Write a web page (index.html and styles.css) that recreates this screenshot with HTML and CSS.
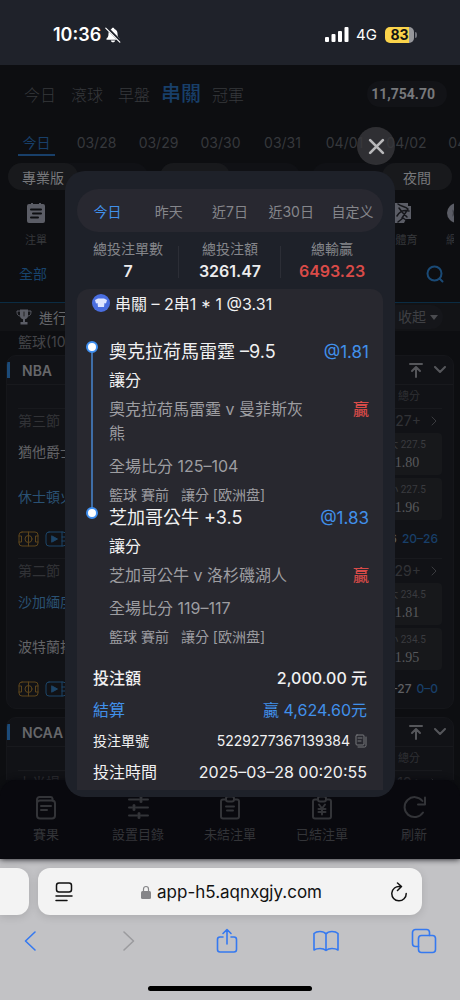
FILE: index.html
```html
<!DOCTYPE html>
<html lang="zh-Hant">
<head>
<meta charset="utf-8">
<meta name="viewport" content="width=device-width, initial-scale=1">
<title>投注記錄</title>
<link rel="stylesheet" href="styles.css">
</head>
<body>
<svg class="defs" aria-hidden="true">
  <symbol id="i-top" viewBox="0 0 14 16"><path d="M1 2h12M7 15V5M3 9l4-4 4 4"/></symbol>
  <symbol id="i-down" viewBox="0 0 12 8"><path d="M1 1l5 5 5-5"/></symbol>
  <symbol id="i-right" viewBox="0 0 6 10"><path d="M1 1l4 4-4 4"/></symbol>
  <symbol id="i-court" viewBox="0 0 22 16"><rect x="1" y="1" width="19" height="14" rx="3"/><path d="M10.500 1v14M1 5h2.500v6H1M20 5h-2.500v6H20"/><circle cx="10.500" cy="8" r="3.500"/></symbol>
  <symbol id="i-video" viewBox="0 0 22 16"><rect x="1" y="1" width="20" height="14" rx="3"/><path d="M17 1v14M17 6h4M17 10h4"/><path d="M7 5l5.500 3L7 11z" fill="currentColor"/></symbol>
</svg>

<header class="status">
  <div class="status-left">
    <span class="clock">10:36</span>
    <svg class="bell" viewBox="0 0 16 16" aria-hidden="true"><path d="M8 .8c.8 0 1.300.5 1.400 1.200 2 .6 3.100 2.300 3.100 4.400 0 3 .8 3.900 1.900 5 .5.500.2 1.300-.5 1.300H2.100c-.7 0-1-.8-.5-1.300 1.100-1.100 1.900-2 1.900-5 0-2.100 1.100-3.800 3.100-4.400C6.700 1.300 7.200.8 8 .8zM5.800 13.500h4.400c-.2 1.100-1.100 1.800-2.200 1.800s-2-.7-2.200-1.800z" fill="#fff"/><path d="M1.500.5l14 14" stroke="#1f222a" stroke-width="3"/><path d="M.8 1.200l14 14" stroke="#fff" stroke-width="1.200"/></svg>
  </div>
  <div class="status-right">
    <svg class="signal" viewBox="0 0 24 15" aria-hidden="true"><rect x="0" y="10" width="4" height="5" rx="1"/><rect x="6.500" y="7" width="4" height="8" rx="1"/><rect x="13" y="4" width="4" height="11" rx="1"/><rect x="19.500" y="0" width="4" height="15" rx="1"/></svg>
    <span class="network">4G</span>
    <span class="battery"><span class="battery-level">83</span></span>
  </div>
</header>

<main class="app">
  <div class="feed">
    <nav class="sports">
      <a href="#">今日</a><a href="#">滾球</a><a href="#">早盤</a><a href="#" class="on">串關</a><a href="#">冠軍</a>
      <span class="balance">11,754.70</span>
    </nav>
    <nav class="dates">
      <a href="#" class="on">今日</a><a href="#">03/28</a><a href="#">03/29</a><a href="#">03/30</a><a href="#">03/31</a><a href="#">04/01</a><a href="#">04/02</a><a href="#">04/03</a>
    </nav>
    <div class="switches">
      <div class="switch"><button class="on">專業版</button><button>新手版</button></div>
      <div class="switch"><button class="on">熱門</button><button>時間</button></div>
      <div class="switch"><button>日間</button><button class="on">夜間</button></div>
    </div>
    <div class="shortcuts">
      <a href="#"><svg viewBox="0 0 22 22" aria-hidden="true"><path d="M4 2h2V1h2v1h6V1h2v1h2a2 2 0 0 1 2 2v15a2 2 0 0 1-2 2H4a2 2 0 0 1-2-2V4a2 2 0 0 1 2-2z" fill="#5b5d66"/><path d="M6 7.500h10M8 11.500h8M6 15.500h7" stroke="#0d0e11" stroke-width="2" stroke-linecap="round"/></svg>注單</a>
      <a href="#"><svg viewBox="0 0 22 22" aria-hidden="true"><path d="M1 1h17v3h3v13h-5l-2 4H1z" fill="#5b5d66"/><path d="M8 2c4 3 7 2 10 5M7 14c3-5 8-6 12-5M11 9l6 6M18 7l-6 9M8 20l5-4 3 2M9 6l3 4" stroke="#15161a" stroke-width="1.500" fill="none"/></svg>熊體育</a>
      <a href="#"><svg viewBox="0 0 22 22" aria-hidden="true"><circle cx="11" cy="11" r="10" fill="#5b5d66"/><circle cx="14" cy="11" r="8" fill="#0d0e11"/><path d="M9 4c-3 4-3 10 0 14M12 5c-2 4-2 8 0 12" stroke="#5b5d66" stroke-width="1.500" fill="none"/></svg>網球</a>
    </div>
    <div class="filter">
      <a href="#">全部</a>
      <button aria-label="搜尋"><svg viewBox="0 0 18 18" aria-hidden="true"><circle cx="8.500" cy="8.500" r="7"/><path d="M13.500 13.500l3 3"/></svg></button>
    </div>
    <div class="section">
      <svg class="trophy" viewBox="0 0 16 16" aria-hidden="true"><path d="M4 .5h8v6a4 4 0 0 1-3 3.800V13h2.500v2.500h-7V13H7v-2.700a4 4 0 0 1-3-3.800z" fill="#5b5d66"/><path d="M4 2H1c0 4 1 5 3.500 5M12 2h3c0 4-1 5-3.500 5" fill="none" stroke="#5b5d66"/><path d="M8 3v4" stroke="#222"/></svg>
      <span>進行中</span>
      <button class="fold">收起 <i></i></button>
    </div>
    <div class="group">籃球(10)</div>

    <section class="league">
      <header><h2>NBA</h2><svg class="up"><use href="#i-top"/></svg><svg class="down"><use href="#i-down"/></svg></header>
      <div class="col">總分</div>
      <article class="match">
        <div class="period"><span>第三節</span><span class="more">27+ <svg><use href="#i-right"/></svg></span></div>
        <div class="line"><span>猶他爵士</span><button><small>大 227.5</small>1.80</button></div>
        <div class="line"><span class="blue">休士頓火箭</span><button><small>小 227.5</small>1.96</button></div>
        <div class="score"><svg class="court"><use href="#i-court"/></svg><svg class="video"><use href="#i-video"/></svg><b>86</b><em>20–26</em></div>
      </article>
      <article class="match">
        <div class="period"><span>第二節</span><span class="more">29+ <svg><use href="#i-right"/></svg></span></div>
        <div class="line"><span class="blue">沙加緬度國王</span><button><small>大 234.5</small>1.81</button></div>
        <div class="line"><span>波特蘭拓荒者</span><button><small>小 234.5</small>1.95</button></div>
        <div class="score"><svg class="court"><use href="#i-court"/></svg><svg class="video"><use href="#i-video"/></svg><b>30–27</b><em>0–0</em></div>
      </article>
    </section>
    <section class="league">
      <header><h2>NCAA</h2><svg class="up"><use href="#i-top"/></svg><svg class="down"><use href="#i-down"/></svg></header>
      <div class="col">總分</div>
      <article class="match">
        <div class="period"><span>上半場</span><span class="more">19+ <svg><use href="#i-right"/></svg></span></div>
      </article>
    </section>
  </div>

  <nav class="tabbar">
    <a href="#"><svg viewBox="0 0 24 24" aria-hidden="true"><path d="M3 7V4a2.500 2.500 0 0 1 2.500-2.500h11A2 2 0 0 1 18.500 3v2"/><rect x="3" y="5" width="18" height="18" rx="3"/><path d="M7 10.500h10M7 14.500h6"/></svg>賽果</a>
    <a href="#"><svg viewBox="0 0 24 24" aria-hidden="true"><path d="M3 4h10M17 4h5M3 12h3M10 12h12M3 20h8M15 20h7"/><path d="M15 2v4M8 10v4M13 18v4" stroke-width="3"/></svg>設置目錄</a>
    <a href="#"><svg viewBox="0 0 24 24" aria-hidden="true"><path d="M7 4H5a2 2 0 0 0-2 2v15a2 2 0 0 0 2 2h14a2 2 0 0 0 2-2V6a2 2 0 0 0-2-2h-2"/><rect x="8" y="1" width="8" height="5" rx="2"/><path d="M8 11h8M9 15h6"/></svg>未結注單</a>
    <a href="#"><svg viewBox="0 0 24 24" aria-hidden="true"><path d="M7 4H5a2 2 0 0 0-2 2v15a2 2 0 0 0 2 2h14a2 2 0 0 0 2-2V6a2 2 0 0 0-2-2h-2"/><rect x="8" y="1" width="8" height="5" rx="2"/><path d="M9 9l3 4 3-4M12 13v6M8.500 13.500h7M8.500 16.500h7"/></svg>已結注單</a>
    <a href="#"><svg viewBox="0 0 24 24" aria-hidden="true"><path d="M20.500 5.500A10 10 0 1 0 21 17M23 2v7h-7" /></svg>刷新</a>
  </nav>

  <div class="overlay">
    <div class="dialog" role="dialog" aria-label="投注記錄">
      <button class="close" aria-label="關閉"><svg viewBox="0 0 16 16" aria-hidden="true"><path d="M2 2l12 12M14 2L2 14"/></svg></button>
      <nav class="ranges">
        <button class="on">今日</button><button>昨天</button><button>近7日</button><button>近30日</button><button>自定义</button>
      </nav>
      <dl class="totals">
        <div><dt>總投注單數</dt><dd>7</dd></div>
        <div><dt>總投注額</dt><dd>3261.47</dd></div>
        <div><dt>總輸贏</dt><dd class="red">6493.23</dd></div>
      </dl>
      <section class="ticket">
        <h3><svg viewBox="0 0 18 18" aria-hidden="true"><circle cx="9" cy="9" r="9" fill="#4a6ee0"/><path d="M6 4.500h6l3 1.500-1 3.500-1.500-.5-.5 4H6l-.5-4L4 9.500 3 6z" fill="#dfe6ff"/></svg>串關 – 2串1 * 1 @3.31</h3>
        <div class="leg">
          <div class="rail"><i></i></div>
          <div class="leg-body">
            <div class="pick"><span>奧克拉荷馬雷霆 –9.5</span><span class="odds">@1.81</span></div>
            <div class="kind">讓分</div>
            <div class="teams"><span>奧克拉荷馬雷霆 v 曼菲斯灰熊</span><span class="red">贏</span></div>
            <div class="final">全場比分 125–104</div>
            <div class="tags"><span>籃球 賽前</span><span>讓分 [欧洲盘]</span></div>
          </div>
        </div>
        <div class="leg">
          <div class="rail"><i></i></div>
          <div class="leg-body">
            <div class="pick"><span>芝加哥公牛 +3.5</span><span class="odds">@1.83</span></div>
            <div class="kind">讓分</div>
            <div class="teams"><span>芝加哥公牛 v 洛杉磯湖人</span><span class="red">贏</span></div>
            <div class="final">全場比分 119–117</div>
            <div class="tags"><span>籃球 賽前</span><span>讓分 [欧洲盘]</span></div>
          </div>
        </div>
        <dl class="summary">
          <div class="stake"><dt>投注額</dt><dd>2,000.00 元</dd></div>
          <div class="settle"><dt>結算</dt><dd>贏 4,624.60元</dd></div>
          <div class="number"><dt>投注單號</dt><dd>5229277367139384 <button aria-label="複製"><svg viewBox="0 0 12 14" aria-hidden="true"><rect x="1" y="1" width="8" height="10" rx="1"/><path d="M3 4h4M3 7h3M11 3v8.500a1.500 1.500 0 0 1-1.500 1.500H3"/></svg></button></dd></div>
          <div><dt>投注時間</dt><dd>2025–03–28 00:20:55</dd></div>
        </dl>
      </section>
    </div>
  </div>
</main>

<footer class="browser">
  <div class="address-row">
    <div class="peek"></div>
    <div class="address">
      <button aria-label="頁面選項"><svg viewBox="0 0 18 20" aria-hidden="true"><rect x="1.500" y="1" width="15" height="9" rx="2.500"/><path d="M1 14h16M1 18.500h11"/></svg></button>
      <button class="host"><svg viewBox="0 0 10 14" aria-hidden="true"><path d="M2.500 6.500V4a2.500 2.500 0 0 1 5 0v2.500" fill="none" stroke="#858588" stroke-width="1.200"/><rect x="0" y="6" width="10" height="8" rx="1.500" fill="#858588"/></svg>app-h5.aqnxgjy.com</button>
      <button aria-label="重新載入"><svg viewBox="0 0 18 20" aria-hidden="true"><path d="M10 4.500A7.200 7.200 0 1 0 16.200 11.500M7.500 1l4 3.500-4 4"/></svg></button>
    </div>
  </div>
  <nav class="tools">
    <button aria-label="返回"><svg viewBox="0 0 26 26" aria-hidden="true"><path d="M18 4l-9.500 9L18 22"/></svg></button>
    <button aria-label="前進" class="off"><svg viewBox="0 0 26 26" aria-hidden="true"><path d="M8 4l9.500 9L8 22"/></svg></button>
    <button aria-label="分享"><svg viewBox="0 0 26 26" aria-hidden="true"><path d="M9 9H6a2.500 2.500 0 0 0-2.500 2.500v10A2.500 2.500 0 0 0 6 24h14a2.500 2.500 0 0 0 2.500-2.500v-10A2.500 2.500 0 0 0 20 9h-3M13 16V1.500M9 5.500l4-4 4 4"/></svg></button>
    <button aria-label="書籤"><svg viewBox="0 0 26 26" aria-hidden="true"><path d="M13 6c-1.500-2-3.500-2.500-6-2.500S2.500 4 1 5.500V22c1.500-1 3.500-1.500 6-1.500s4.500.5 6 2c1.500-1.500 3.500-2 6-2s4.500.5 6 1.500V5.500C23.500 4 21.500 3.500 19 3.500S14.500 4 13 6zv16.500"/></svg></button>
    <button aria-label="分頁"><svg viewBox="0 0 26 26" aria-hidden="true"><rect x="7.500" y="7.500" width="17" height="17" rx="3"/><path d="M7.500 18.500H4.500a3 3 0 0 1-3-3V4.500a3 3 0 0 1 3-3h11a3 3 0 0 1 3 3v3"/></svg></button>
  </nav>
  <div class="home"></div>
</footer>
</body>
</html>
```
FILE: styles.css
```css
* { box-sizing: border-box; margin: 0; padding: 0; }

body {
  display: flex;
  flex-direction: column;
  height: 100vh;
  overflow: hidden;
  background: #0d0e11;
  color: #fff;
  font-family: Inter, "Noto Sans CJK TC", sans-serif;
  font-size: 16px;
}

a { color: inherit; text-decoration: none; }
button { border: 0; background: none; color: inherit; font: inherit; white-space: nowrap; }
svg { display: block; fill: none; stroke-linecap: round; stroke-linejoin: round; flex: none; }
.defs { display: none; }
.red { color: #d94b48; }

/* Status bar */
.status {
  flex: none;
  display: flex;
  justify-content: space-between;
  align-items: center;
  height: 65px;
  padding: 4px 46px 0 53px;
  background: #1f222a;
}
.status-left, .status-right { display: flex; align-items: center; }
.status-left { gap: 4px; }
.clock { font-size: 18px; font-weight: 600; }
.bell { width: 16px; height: 16px; }
.signal { width: 24px; height: 15px; fill: #fff; }
.network { margin: 0 8px 0 7px; font-size: 15px; }
.battery {
  position: relative;
  width: 29px;
  height: 16px;
  border-radius: 5px;
  background: linear-gradient(to right, #fbd44b 83%, #96979b 83%);
}
.battery::after {
  content: "";
  position: absolute;
  top: 5px;
  right: -3px;
  width: 2px;
  height: 6px;
  border-radius: 0 2px 2px 0;
  background: #70727a;
}
.battery-level { display: block; color: #141414; font-size: 14px; font-weight: 700; line-height: 16px; text-align: center; }

/* Dimmed page */
.app { position: relative; flex: 1; min-height: 0; display: flex; flex-direction: column; }
.feed { flex: 1; min-height: 0; overflow: hidden; color: #36383c; }
.sports { display: flex; align-items: center; gap: 15px; height: 58px; padding: 0 13px 0 24px; }
.sports a { font-weight: 300; }
.sports .on { margin: 0 -4px; color: #183f69; font-size: 20px; font-weight: 500; line-height: 20px; }
.balance {
  margin-left: auto;
  padding: 0 12px 0 4px;
  border-radius: 13px;
  background: #121317;
  color: #77787b;
  font: bold 14px/26px Roboto, sans-serif;
}
.dates { display: flex; gap: 21px; height: 40px; padding-left: 18px; overflow: hidden; line-height: 40px; font-size: 14px; }
.dates a { flex: none; width: 41px; height: 33px; text-align: center; }
.dates .on { width: 37px; border-bottom: 2px solid #183f69; color: #183f69; }
.switches { display: flex; justify-content: space-between; padding: 0 8px; height: 27px; }
.switch { display: flex; width: 140px; border-radius: 14px; background: #101115; }
.switch button { flex: 1; border-radius: 14px; font-size: 14px; color: #222429; }
.switch .on { background: #18191c; color: #77787b; }
.shortcuts { display: flex; height: 70px; margin-right: 6px; padding: 12px 0 0 16px; overflow: hidden; font-size: 11px; }
.shortcuts a { flex: none; display: flex; flex-direction: column; align-items: center; gap: 8px; width: 40px; line-height: 16px; }
.shortcuts a:nth-child(2) { margin-left: auto; }
.shortcuts a:nth-child(3) { margin: 0 -23px 0 16px; }
.shortcuts svg { width: 22px; height: 22px; }
.filter { display: flex; justify-content: space-between; height: 42px; padding: 0 16px 0 19px; color: #18436c; font-size: 14px; line-height: 28px; }
.filter svg { width: 18px; height: 18px; stroke: #1a4a76; stroke-width: 2; }
.filter button { height: 28px; }
.section { display: flex; align-items: center; gap: 7px; height: 29px; padding: 0 17px 0 16px; border-top: 1px solid #0b2c43; background: #121316; color: #66676b; font-size: 14px; }
.trophy { width: 16px; height: 16px; }
.fold { display: flex; align-items: center; gap: 4px; margin-left: auto; padding: 0 5px 0 14px; border-radius: 12px; background: #15161a; line-height: 24px; color: #3f4044; }
.fold i { border: 4px solid transparent; border-top: 5px solid #4a4b4f; border-bottom: 0; }
.group { height: 24px; padding-left: 18px; color: #434448; font-size: 14px; line-height: 22px; }

.league { margin: 0 6px 8px; border: 1px solid #15161a; border-radius: 10px; background: #111216; overflow: hidden; }
.league header { display: flex; align-items: center; height: 29px; padding: 0 7px 0 15px; border-bottom: 1px solid #18191d; background: linear-gradient(#1b4a78, #1b4a78) -2px center / 5px 16px no-repeat; }
.league h2 { flex: 1; color: #66676a; font-size: 14px; font-weight: 600; }
.league header svg { stroke: #55565a; stroke-width: 2; }
.up { width: 14px; height: 16px; margin-right: 11px; }
.down { width: 12px; height: 8px; }
.col { height: 23px; padding-right: 33px; font-size: 11px; line-height: 23px; text-align: right; color: #2f3034; }
.match { margin: 0 11px; border-top: 1px solid #18191d; }
.period { display: flex; justify-content: space-between; height: 24px; line-height: 24px; font-size: 14px; color: #313236; }
.more { display: flex; align-items: center; gap: 10px; padding-right: 5px; }
.more svg { width: 6px; height: 10px; stroke: #3a3b3f; }
.line { display: flex; justify-content: space-between; height: 42px; margin-bottom: 3px; font-size: 14px; line-height: 38px; color: #626366; }
.line .blue { color: #2a5173; }
.line button { display: flex; flex-direction: column; width: 70px; height: 42px; padding-top: 4px; border-radius: 4px; background: #17181b; align-items: center; font: 14px/20px "Liberation Serif", serif; color: #58595c; }
.line small { font: 10px/16px Roboto, "Noto Sans CJK TC", sans-serif; color: #3a3b3f; }
.score { display: flex; align-items: center; height: 35px; gap: 5px; padding: 0 4px 4px 0; font-size: 12px; }
.court, .video { width: 22px; height: 16px; }
.court { stroke: #5d451c; color: #5d451c; }
.video { stroke: #1d4568; color: #1d4568; }
.score b { margin-left: auto; color: #5e5f63; font-weight: 500; }
.score em { font-style: normal; font-weight: 500; color: #183f69; }

.tabbar { position: relative; flex: none; display: flex; height: 79px; padding-top: 15px; border-radius: 16px 16px 0 0; background: #09090e; color: #333438; font-size: 13px; box-shadow: 0 0 6px #09090e; }
.tabbar a { flex: 1; display: flex; flex-direction: column; align-items: center; gap: 5px; line-height: 18px; }
.tabbar svg { width: 24px; height: 25px; stroke: #333438; stroke-width: 2; }

/* Bet record dialog */
.overlay { position: absolute; inset: 0; padding: 106px 65px 0; }
.dialog { position: relative; padding: 18px 12px 7px; border-radius: 20px; background: #1e2129; }
.close { position: absolute; top: -44px; right: 0; display: grid; place-items: center; width: 38px; height: 38px; border-radius: 50%; background: rgb(56 56 60 / 80%); }
.close svg { width: 17px; height: 17px; stroke: #b9b9bb; stroke-width: 2.500; }
.ranges { display: grid; grid-template-columns: repeat(5, 1fr); height: 43px; border-radius: 22px; background: #282830; color: #85868b; font-size: 14px; }
.ranges .on { color: #4190ea; }
.totals { display: grid; grid-template-columns: repeat(3, 1fr); padding: 6px 0 7px; text-align: center; }
.totals div { padding: 0 2px; background: linear-gradient(#2c2e36, #2c2e36) right 8px / 1px 32px no-repeat; }
.totals div:last-child { background: none; }
.totals dt { color: #85868b; font-size: 14px; line-height: 22px; }
.totals dd { font-size: 16px; font-weight: 600; line-height: 22px; }
.totals dd:not(.red) { color: #ececed; }
.ticket { padding: 0 16px 2px; border-radius: 12px 12px 0 0; background: #28282f; color: #f1f1f2; }
.ticket h3 { display: flex; align-items: center; gap: 5px; height: 28px; font-size: 16px; font-weight: 400; margin: 0 0 21px -1px; }
.ticket h3 svg { width: 18px; height: 18px; }
.leg { display: flex; gap: 10px; margin-left: -7px; }
.rail { display: flex; flex-direction: column; align-items: center; width: 12px; padding-top: 3px; }
.leg:first-of-type .rail::after { content: ""; flex: 1; width: 2px; margin-bottom: -4px; background: #3f6ea8; }
.rail i { width: 12px; height: 12px; border: 2px solid #3f8ff0; border-radius: 50%; background: #fff; }
.leg-body { flex: 1; min-width: 0; margin: 0 -2px 0 1px; }
.pick, .teams { display: flex; justify-content: space-between; }
.pick { font-size: 18px; line-height: 28px; }
.odds { color: #4190ea; font-size: 17px; }
.kind { line-height: 28px; }
.teams { margin-top: 3px; color: #9d9da1; line-height: 24px; }
.teams span:first-child { max-width: 204px; }
.teams .red { font-weight: 500; }
.final { margin-top: 9px; color: #9d9da1; line-height: 24px; }
.tags { display: flex; gap: 12px; margin-top: 8px; color: #9d9da1; font-size: 14px; line-height: 18px; }
.summary { margin-top: 16px; }
.summary div { display: flex; justify-content: space-between; line-height: 32px; }
.summary .stake { font-weight: 500; }
.summary .settle { color: #4190ea; }
.summary .number { font-size: 14px; line-height: 30px; }
.summary dd { display: flex; align-items: center; gap: 5px; }
.summary svg { width: 12px; height: 14px; stroke: #77787d; }

/* Browser chrome */
.browser { flex: none; padding-top: 9px; background: #c2c2c5; color: #111; }
.address-row { display: flex; gap: 9px; padding-right: 38px; }
.peek { width: 29px; border-radius: 0 12px 12px 0; background: #f3f3f3; box-shadow: 0 2px 8px rgb(0 0 0 / 12%); }
.address { flex: 1; display: flex; justify-content: space-between; align-items: center; height: 47px; padding: 0 14px 0 17px; border-radius: 12px; background: #f3f3f3; box-shadow: 0 2px 8px rgb(0 0 0 / 12%); }
.address svg { width: 18px; height: 20px; stroke: #111; stroke-width: 1.500; }
.address .host { display: flex; align-items: center; gap: 6px; font-size: 17px; }
.address .host svg { width: 10px; height: 14px; stroke: none; }
.tools { display: flex; justify-content: space-between; padding: 13px 23px 0 17px; }
.tools svg { width: 26px; height: 26px; stroke: #3579f0; stroke-width: 1.600; }
.tools .off svg { stroke: #9b9b9e; }
.home { width: 164px; height: 5px; margin: 32px auto 9px; border-radius: 3px; background: #000; }
```
